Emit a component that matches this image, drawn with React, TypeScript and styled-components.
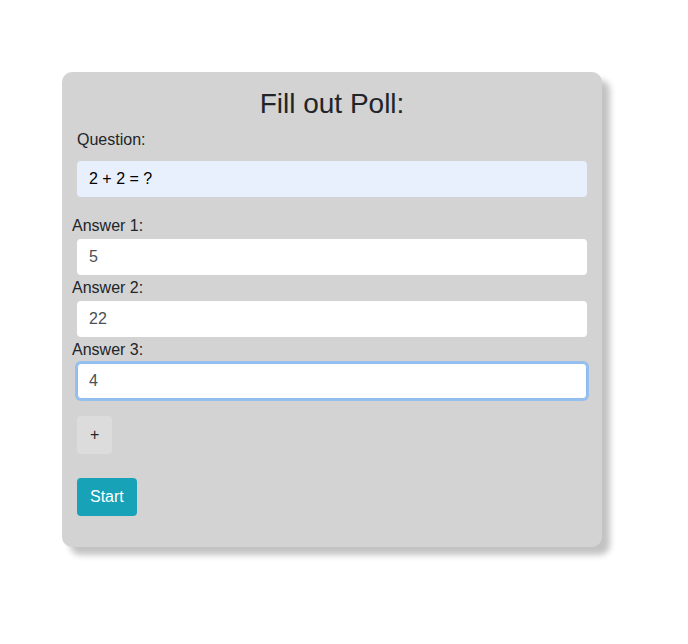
import React, { useState } from "react";
import styled, { createGlobalStyle } from "styled-components";

const Global = createGlobalStyle`
  html, body { margin: 0; padding: 0; background: #ffffff; }
  body {
    font-family: "Liberation Sans", Arial, sans-serif;
    font-size: 16px;
    line-height: 1.5;
    color: #212529;
  }
  * { box-sizing: border-box; }
`;

const Page = styled.div`
  padding: 72px 0 40px 62px;
`;

const Card = styled.div`
  width: 540px;
  min-height: 475px;
  background: #d3d3d3;
  border-radius: 10px;
  box-shadow: 8px 8px 6px rgba(0, 0, 0, 0.24);
  padding: 15px 15px 31px 15px;
  display: flex;
  flex-direction: column;
`;

const Title = styled.h3`
  margin: 0;
  font-size: 28px;
  font-weight: 400;
  line-height: 1.2;
  text-align: center;
  color: #212529;
`;

const Label = styled.label<{ $shift?: number }>`
  display: block;
  font-size: 16px;
  line-height: 24px;
  padding-top: 1px;
  margin-left: ${(p) => p.$shift ?? 0}px;
  color: #212529;
`;

const Field = styled.input<{ $filled?: boolean }>`
  display: block;
  width: 100%;
  height: 36px;
  padding: 6px 12px 6px 11px;
  font-family: "Liberation Sans", Arial, sans-serif;
  font-size: 16px;
  line-height: 24px;
  color: ${(p) => (p.$filled ? "#000000" : "#495057")};
  background: ${(p) => (p.$filled ? "#e8f0fe" : "#ffffff")};
  border: 1px solid transparent;
  border-radius: 4px;
  outline: none;
  caret-color: #000000;
  &:focus {
    border-color: #8fbcec;
    box-shadow: 0 0 0 2px #94bfee;
  }
`;

const QuestionBlock = styled.div`
  display: flex;
  flex-direction: column;
  gap: 9px;
  margin-top: 6px;
`;

const Answers = styled.div`
  display: flex;
  flex-direction: column;
  margin-top: 16px;
`;

const AnswerRow = styled.div`
  display: flex;
  flex-direction: column;
  gap: 1px;
`;

const Button = styled.button<{ $variant?: "light" | "info" }>`
  align-self: flex-start;
  font-family: "Liberation Sans", Arial, sans-serif;
  font-size: 16px;
  line-height: 24px;
  padding: 6px 12px;
  border: 1px solid transparent;
  border-radius: 4px;
  cursor: pointer;
  color: ${(p) => (p.$variant === "info" ? "#ffffff" : "#212529")};
  background: ${(p) => (p.$variant === "info" ? "#17a2b8" : "#dcdcdc")};
`;

const Actions = styled.div`
  display: flex;
  flex-direction: column;
  align-items: flex-start;
  gap: 24px;
  margin-top: 17px;
`;

export default function App() {
  const [answers, setAnswers] = useState(["5", "22", "4"]);
  return (
    <>
      <Global />
      <Page>
        <Card>
          <Title>Fill out Poll:</Title>
          <QuestionBlock>
            <Label>Question:</Label>
            <Field $filled defaultValue="2 + 2 = ?" />
          </QuestionBlock>
          <Answers>
            {answers.map((a, i) => (
              <AnswerRow key={i}>
                <Label $shift={-5}>Answer {i + 1}:</Label>
                <Field
                  value={a}
                  autoFocus={i === answers.length - 1}
                  onChange={(e) => {
                    const next = [...answers];
                    next[i] = e.target.value;
                    setAnswers(next);
                  }}
                />
              </AnswerRow>
            ))}
          </Answers>
          <Actions>
            <Button $variant="light">+</Button>
            <Button $variant="info">Start</Button>
          </Actions>
        </Card>
      </Page>
    </>
  );
}
